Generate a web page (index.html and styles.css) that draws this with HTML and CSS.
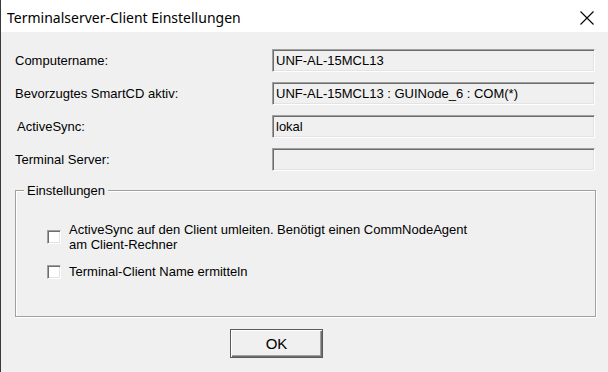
FILE: index.html
```html
<!DOCTYPE html>
<html lang="de">
<head>
<meta charset="utf-8">
<title>Terminalserver-Client Einstellungen</title>
<link rel="stylesheet" href="styles.css">
</head>
<body>
<div class="window">
  <div class="titlebar">
    <span class="title">Terminalserver-Client Einstellungen</span>
    <svg class="close" width="14" height="14" viewBox="0 0 14 14"><path d="M0.5 0.5 L13.5 13.5 M13.5 0.5 L0.5 13.5" stroke="#000" stroke-width="1.1" fill="none"/></svg>
  </div>
  <div class="content">
    <div class="form">
      <div class="label">Computername:</div>
      <div class="field">UNF-AL-15MCL13</div>
      <div class="label">Bevorzugtes SmartCD aktiv:</div>
      <div class="field">UNF-AL-15MCL13 : GUINode_6 : COM(*)</div>
      <div class="label l-indent">ActiveSync:</div>
      <div class="field">lokal</div>
      <div class="label">Terminal Server:</div>
      <div class="field"></div>
    </div>
    <div class="group">
      <span class="legend">Einstellungen</span>
      <div class="check-row">
        <span class="checkbox"></span>
        <span class="check-text">ActiveSync auf den Client umleiten. Benötigt einen CommNodeAgent<br>am Client-Rechner</span>
      </div>
      <div class="check-row second">
        <span class="checkbox"></span>
        <span class="check-text">Terminal-Client Name ermitteln</span>
      </div>
    </div>
    <div class="buttons">
      <button class="btn">OK</button>
    </div>
  </div>
</div>
</body>
</html>
```

FILE: styles.css
```css
html, body {
  margin: 0;
  padding: 0;
}
body {
  width: 608px;
  height: 372px;
  overflow: hidden;
  background: #f0f0f0;
  font-family: "Liberation Sans", Arial, sans-serif;
  font-size: 13px;
  color: #000;
}
.window {
  height: 372px;
  border-left: 1px solid #3a3a3a;
  box-sizing: border-box;
  background: #f0f0f0;
}
.titlebar {
  height: 32px;
  background: #fff;
  display: flex;
  align-items: center;
  padding-left: 6px;
  padding-right: 14px;
  justify-content: space-between;
}
.title {
  font-family: "Noto Sans", "Open Sans", sans-serif;
  font-size: 14px;
  position: relative;
  top: 1px;
}
.close {
  display: block;
  margin-top: 3px;
}
.content {
  padding-top: 17px;
}
.form {
  display: grid;
  grid-template-columns: 257px 323px;
  grid-auto-rows: 23px;
  row-gap: 10px;
  padding-left: 14px;
}
.label {
  display: flex;
  align-items: center;
  line-height: 15px;
}
.l-indent {
  padding-left: 2px;
}
.field {
  box-sizing: border-box;
  height: 23px;
  border: 1px solid;
  border-color: #a0a0a0 #fff #fff #a0a0a0;
  box-shadow: inset 1px 1px 0 #6d6d6d, inset -1px -1px 0 #e3e3e3;
  padding: 0 3px;
  display: flex;
  align-items: center;
  white-space: nowrap;
}
.group {
  position: relative;
  margin: 19px 12px 0 14px;
  height: 127px;
  box-sizing: border-box;
  border: 1px solid #a0a0a0;
  box-shadow: inset 1px 1px 0 #fff, 1px 1px 0 #fff;
  padding: 31px 0 0 31px;
}
.legend {
  position: absolute;
  left: 8px;
  top: -8px;
  padding: 0 3px;
  background: #f0f0f0;
  line-height: 15px;
}
.check-row {
  display: flex;
  align-items: center;
  gap: 8px;
  line-height: 15px;
}
.check-row.second {
  margin-top: 12px;
}
.checkbox {
  width: 14px;
  height: 14px;
  box-sizing: border-box;
  border: 1px solid;
  border-color: #a0a0a0 #fff #fff #a0a0a0;
  box-shadow: inset 1px 1px 0 #6d6d6d, inset -1px -1px 0 #e3e3e3;
  background: #fff;
  flex: none;
}
.buttons {
  padding: 12px 0 0 229px;
}
.btn {
  display: block;
  width: 93px;
  height: 29px;
  box-sizing: border-box;
  background: #f0f0f0;
  border: 1px solid #5a5a5a;
  box-shadow: inset 1px 1px 0 #fff, inset -1px -1px 0 #6d6d6d, inset -2px -2px 0 #a0a0a0;
  font-family: "Liberation Sans", Arial, sans-serif;
  font-size: 15px;
  color: #000;
  padding: 0;
}
```
